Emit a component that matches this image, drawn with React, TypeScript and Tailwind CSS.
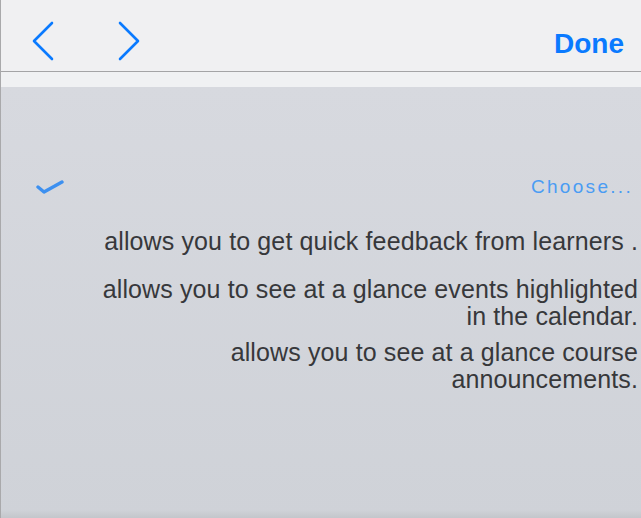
export default function App() {
  const descriptions = [
    { text: 'allows you to get quick feedback from learners .', gap: 'mt-[32px]' },
    { text: 'allows you to see at a glance events highlighted in the calendar.', gap: 'mt-[21px]' },
    { text: 'allows you to see at a glance course announcements.', gap: 'mt-[9px]' },
  ];

  return (
    <div className="w-[641px] h-[518px] overflow-hidden flex flex-col border-l border-[#a9a9ab] font-['Liberation_Sans',Arial,sans-serif]">
      {/* Nav bar */}
      <div className="h-[72px] shrink-0 flex items-start pt-[20px] bg-[#f0f0f2] border-b border-[#a4a4a6]">
        <button className="ml-[29px] text-[#0a7aff]" aria-label="Back">
          <svg width="26" height="42" viewBox="0 0 26 42" fill="none" stroke="currentColor" strokeWidth="2.6" strokeLinecap="round" strokeLinejoin="round">
            <polyline points="22,3 4,21 22,39" />
          </svg>
        </button>
        <button className="ml-[60px] text-[#0a7aff]" aria-label="Forward">
          <svg width="26" height="42" viewBox="0 0 26 42" fill="none" stroke="currentColor" strokeWidth="2.6" strokeLinecap="round" strokeLinejoin="round">
            <polyline points="4,3 22,21 4,39" />
          </svg>
        </button>
        <button className="ml-auto mr-[17px] mt-[10px] text-[28px] leading-[28px] font-bold text-[#0a7aff]">
          Done
        </button>
      </div>

      <div className="h-[15px] shrink-0 bg-[#f0f1f3]" />

      {/* Content */}
      <div className="flex-1 flex flex-col bg-linear-to-b from-[#d7d9df] to-[#cfd2d8]">
        <div className="flex items-start mt-[91px]">
          <svg className="ml-[35px] mt-[1px]" width="28" height="16" viewBox="0 0 28 16" fill="none" stroke="#3d90f0" strokeWidth="3.4" strokeLinecap="round" strokeLinejoin="round">
            <polyline points="2,8 8,13 26,3" />
          </svg>
          <span className="ml-auto mr-[8px] -mt-[1px] text-[19px] leading-[19px] tracking-[2.3px] text-[#4a9cf3]">
            Choose...
          </span>
        </div>

        <div className="ml-[95px] mr-[3px] flex flex-col text-right text-[25px] leading-[27px] tracking-[0.12px] text-[#37383b]">
          {descriptions.map((d) => (
            <p key={d.text} className={d.gap}>
              {d.text}
            </p>
          ))}
        </div>

        <div className="mt-auto h-[8px] bg-linear-to-b from-[#cfd2d8] to-[#c3c6cb]" />
      </div>
    </div>
  );
}
